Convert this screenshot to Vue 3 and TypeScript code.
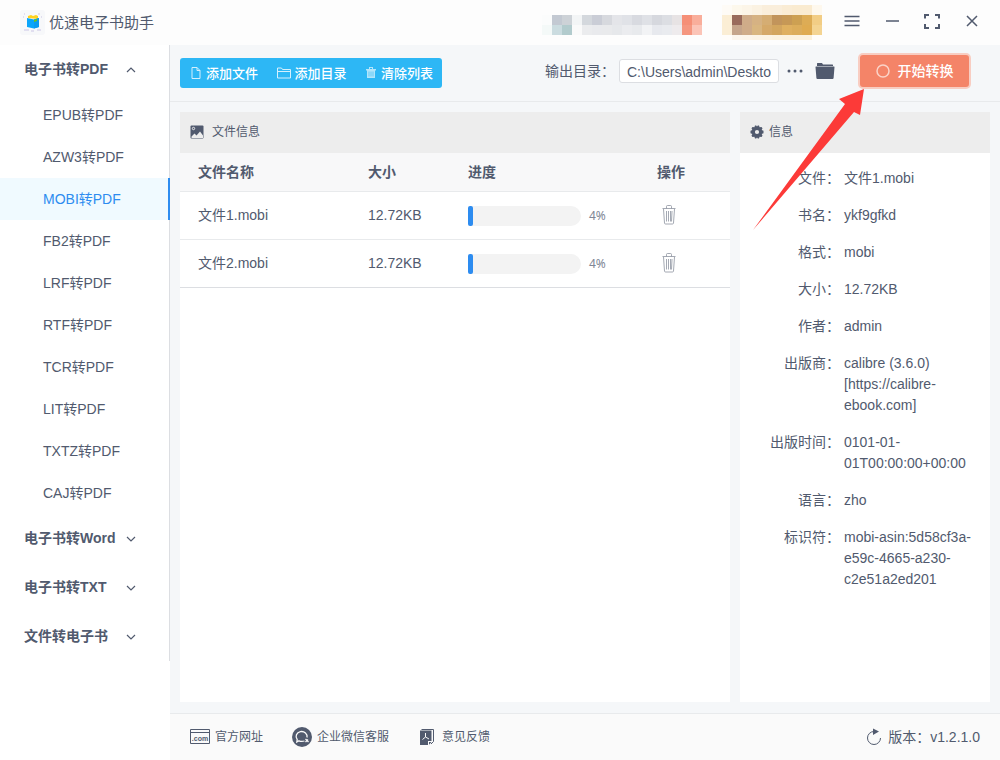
<script setup lang="ts">
import { ref } from 'vue'

interface MenuGroup {
  title: string
  open: boolean
  items: string[]
}
interface BookFile {
  name: string
  size: string
  progress: number
}

const groups = ref<MenuGroup[]>([
  {
    title: '电子书转PDF',
    open: true,
    items: ['EPUB转PDF', 'AZW3转PDF', 'MOBI转PDF', 'FB2转PDF', 'LRF转PDF', 'RTF转PDF', 'TCR转PDF', 'LIT转PDF', 'TXTZ转PDF', 'CAJ转PDF'],
  },
  { title: '电子书转Word', open: false, items: [] },
  { title: '电子书转TXT', open: false, items: [] },
  { title: '文件转电子书', open: false, items: [] },
])
const active = ref('MOBI转PDF')
const outputDir = ref('C:\\Users\\admin\\Deskto')

const files = ref<BookFile[]>([
  { name: '文件1.mobi', size: '12.72KB', progress: 4 },
  { name: '文件2.mobi', size: '12.72KB', progress: 4 },
])

const info: { label: string; lines: string[] }[] = [
  { label: '文件：', lines: ['文件1.mobi'] },
  { label: '书名：', lines: ['ykf9gfkd'] },
  { label: '格式：', lines: ['mobi'] },
  { label: '大小：', lines: ['12.72KB'] },
  { label: '作者：', lines: ['admin'] },
  { label: '出版商：', lines: ['calibre (3.6.0) ', '[https://calibre-', 'ebook.com]'] },
  { label: '出版时间：', lines: ['0101-01-', '01T00:00:00+00:00'] },
  { label: '语言：', lines: ['zho'] },
  { label: '标识符：', lines: ['mobi-asin:5d58cf3a-', 'e59c-4665-a230-', 'c2e51a2ed201'] },
]

const accountTop = ['#fbfcfc', '#c3c9d2', '#cdd2d7', '#f3f5f6', '#d4d8dd', '#cacdd6', '#d7d9de', '#e4e5e9', '#e0e2e7', '#d8dae0', '#dfe1e6', '#d6d8de', '#dcdee3', '#e7e3e4', '#f58f77', '#f9ae9b']
const accountBottom = ['#f4f9f8', '#cbdce0', '#b2cbcd', '#fafafa', '#ebecee', '#e9eaed', '#e9eaec', '#e6e8eb', '#ebecef', '#e8eaed', '#f2f3f5', '#e7e9ee', '#e9ebef', '#eeebed', '#f59780', '#fbc4b7']
const badgeRows = [
  ['#fefbf6', '#fdf8ec', '#fcf5e8', '#fbf2e2', '#faeedb', '#faeedb', '#faecd4', '#faebd0', '#faebd0', '#fef8ed'],
  ['#fbeed5', '#996b5c', '#cfac89', '#d6b283', '#d5ad73', '#c2945b', '#c69856', '#cda052', '#ddac55', '#f2cd85'],
  ['#fbeed5', '#c5a58b', '#cfac89', '#d9b680', '#d5a969', '#d3a65f', '#dfb060', '#dcad5b', '#dfab50', '#f4d492'],
  ['#fffdfa', '#fcf6ed', '#fcf5ea', '#fcf4e6', '#fcf4e4', '#fcf3e0', '#fcf2dd', '#fcf2dd', '#fcf2dd', '#fffdfa'],
]

function removeFile(index: number) {
  files.value.splice(index, 1)
}
</script>

<template>
  <div class="app">
    <header class="titlebar">
      <svg class="logo" viewBox="0 0 25 25" aria-hidden="true">
        <rect width="25" height="25" rx="3" fill="#f7f8fa" />
        <path d="M8 8V6l3-1 2 1 3-1 2 1v3z" fill="#ffd21e" />
        <path d="M7 8l7 1.500L19 8v9l-5 1.500L7 17z" fill="#0ba5fa" />
        <path d="M14 9.500L19 8v9l-5 1.500z" fill="#0b9bf0" />
        <path d="M14 10l3-1v2l-3 1z" fill="#68c51e" />
        <path d="M4 20h5m2 1h3m3-1h4M3 7h1m0-3h1m13 0h2m1 3h1" stroke="#cbc5e5" fill="none" />
      </svg>
      <h1>优速电子书助手</h1>
      <svg class="account" viewBox="0 0 160 20" aria-hidden="true">
        <rect v-for="(c, i) in accountTop" :key="'t' + i" :x="i * 10" y="0" width="10" height="10" :fill="c" />
        <rect v-for="(c, i) in accountBottom" :key="'b' + i" :x="i * 10" y="10" width="10" height="10" :fill="c" />
      </svg>
      <svg class="badge" viewBox="0 0 100 35" aria-hidden="true">
        <g v-for="(row, r) in badgeRows" :key="r">
          <rect v-for="(c, i) in row" :key="i" :x="i * 10" :y="r * 10" width="10" height="10" :fill="c" />
        </g>
      </svg>
      <nav class="window-controls">
        <button type="button" aria-label="菜单"><svg viewBox="0 0 16 16"><path d="M.5 3.500h15M.5 8h15M.5 12.500h15" /></svg></button>
        <button type="button" aria-label="最小化"><svg viewBox="0 0 16 16"><path d="M2 8h13" /></svg></button>
        <button type="button" aria-label="最大化"><svg viewBox="0 0 16 16"><path class="thick" d="M1 5.500V2h4M11 2h4v3.500M15 11v4h-4M5 15H1v-4" /></svg></button>
        <button type="button" aria-label="关闭"><svg viewBox="0 0 16 16"><path d="M3 3l10 10M13 3L3 13" /></svg></button>
      </nav>
    </header>

    <div class="body">
      <aside class="sidebar">
        <nav class="menu">
          <section v-for="g in groups" :key="g.title">
            <button class="group" type="button" :aria-expanded="g.open" @click="g.open = !g.open">
              <span>{{ g.title }}</span>
              <svg :class="{ open: g.open }" viewBox="0 0 10 10"><path d="M1 3l4 4 4-4" /></svg>
            </button>
            <template v-if="g.open">
              <a v-for="item in g.items" :key="item" href="#" class="item" :class="{ active: item === active }" @click.prevent="active = item">{{ item }}</a>
            </template>
          </section>
        </nav>
      </aside>

      <main class="main">
        <div class="toolbar">
          <div class="actions">
            <button type="button">
              <svg class="doc" viewBox="0 0 10 14"><path d="M1 1.500h5l3 3v8H1zM6 1.500v3h3" /></svg>添加文件
            </button>
            <button type="button">
              <svg class="dir" viewBox="0 0 14 14"><path d="M.5 12V2h4l1 1.500h8V12zM.5 5.500h13" /></svg>添加目录
            </button>
            <button type="button">
              <svg class="bin" viewBox="0 0 10 14"><path class="solid" d="M0 3h3V1h4v2h3v1.500H9V12H1V4.500H0zM4 2v1h2V2z" /><path class="slots" d="M3 5.500v5M5 5.500v5M7 5.500v5" /></svg>清除列表
            </button>
          </div>
          <div class="target">
            <label for="output">输出目录：</label>
            <input id="output" v-model="outputDir" class="output" type="text" />
            <button class="plain more" type="button" aria-label="选择目录">
              <svg viewBox="0 0 16 4"><circle cx="2" cy="2" r="1.500" /><circle cx="8" cy="2" r="1.500" /><circle cx="14" cy="2" r="1.500" /></svg>
            </button>
            <button class="plain folder" type="button" aria-label="打开目录">
              <svg viewBox="0 0 20 18"><path d="M2 4V1.500Q2 1 2.500 1H7l1 1.500h9.500q.5 0 .5.500v1z" /><path d="M1 4.500h18q.6 0 .5.600L18.600 16q-.1 1-1 1H2.400q-.9 0-1-1L.5 5.100Q.4 4.500 1 4.500z" /></svg>
            </button>
            <button class="start" type="button">
              <svg viewBox="0 0 14 14"><circle cx="7" cy="7" r="6" /></svg>开始转换
            </button>
          </div>
        </div>

        <div class="panels">
          <section class="panel list">
            <h2 class="wide">
              <svg viewBox="0 0 14 14"><rect x=".5" y=".5" width="13" height="13" rx="1" /><circle class="sun" cx="3.500" cy="3.500" r="1.200" /><path class="hills" d="M1.500 13v-1.500L4.500 8.500 6.500 10.500 10 6.500l3 4V13z" /></svg>
              文件信息
            </h2>
            <table>
              <thead>
                <tr><th class="c-name">文件名称</th><th class="c-size">大小</th><th>进度</th><th class="c-op">操作</th></tr>
              </thead>
              <tbody>
                <tr v-for="(f, i) in files" :key="f.name">
                  <td>{{ f.name }}</td>
                  <td>{{ f.size }}</td>
                  <td>
                    <div class="progress">
                      <div class="track"><div class="fill" :style="{ width: f.progress + '%' }"></div></div>
                      <span>{{ f.progress }}%</span>
                    </div>
                  </td>
                  <td>
                    <button class="plain delete" type="button" aria-label="删除" @click="removeFile(i)">
                      <svg viewBox="0 0 14 20"><path d="M.5 3.500h13M4.500 3.500v-2q0-1 1-1h3q1 0 1 1v2M1.500 4l1 14q.1 1 1 1h7q.9 0 1-1l1-14M4.500 6v10.500M6.500 6v10.500M8.500 6v10.500M10 6l-.5 10.500" /></svg>
                    </button>
                  </td>
                </tr>
              </tbody>
            </table>
          </section>

          <section class="panel details">
            <h2>
              <svg viewBox="0 0 14 14"><path fill-rule="evenodd" d="M5 .5h1.200L7 1.500l.8-1H9l.6 1.700 1.900-.3 1 1.400-.8 1.600 1.800.8v2.600l-1.800.8.8 1.600-1 1.400-1.900-.3-.6 1.700H7.800L7 12.500l-.8 1H5l-.6-1.700-1.900.3-1-1.400.8-1.600-1.800-.8V5.700l1.800-.8-.8-1.600 1-1.400 1.900.3zM7 4.900a2.100 2.100 0 100 4.200 2.100 2.100 0 000-4.200z" /></svg>
              信息
            </h2>
            <dl>
              <div v-for="row in info" :key="row.label">
                <dt>{{ row.label }}</dt>
                <dd><template v-for="(line, n) in row.lines" :key="n">{{ line }}<wbr /></template></dd>
              </div>
            </dl>
          </section>
        </div>

        <footer>
          <a href="#" class="site">
            <svg viewBox="0 0 20 16"><path class="line" d="M.5.500h19v14H.5zM.5 3.500h19" /><text x="10" y="12" text-anchor="middle">.com</text></svg>官方网址
          </a>
          <a href="#" class="service">
            <svg viewBox="0 0 20 20"><circle cx="10" cy="10" r="10" /><path class="ring" d="M12.500 14Q9.500 15 7 13.800L4.800 15l.4-2.500A5.500 5 0 1115 10.500" /><path class="ring" d="M13.500 12l3 3M13.500 15l2.500-2.500" /></svg>企业微信客服
          </a>
          <a href="#" class="feedback">
            <svg viewBox="0 0 16 18"><path d="M1 2.500h11.500V13H9v4H1zM10 14h2.500L10 16.800z" /><path class="line" d="M2.500 1.500h12V13.500L12 16" /><path class="glyph" d="M6.500 5v4L3.500 11.500M6.500 9l3.500 2" /></svg>意见反馈
          </a>
          <button class="plain version" type="button">
            <svg viewBox="0 0 16 18"><path class="arc" d="M8 3.500A6.500 6.500 0 1014.500 10" /><path d="M7 .5l6 3-6 3.500z" /></svg>版本：v1.2.1.0
          </button>
        </footer>
      </main>
    </div>

    <svg class="pointer" viewBox="0 0 114 144" aria-hidden="true"><path d="M112 1L87 11l6 5L1 142l101-118 6 3z" /></svg>
  </div>
</template>

<style>
body {
  margin: 0;
}
</style>

<style scoped>
.app {
  position: relative;
  display: flex;
  flex-direction: column;
  min-height: 100vh;
  background: #f5f7f9;
  color: #515a6e;
  font: 14px/21px "Liberation Sans", "Noto Sans CJK SC", sans-serif;
}
.app *,
.app {
  box-sizing: border-box;
}
button {
  font: inherit;
  color: inherit;
  border: 0;
  padding: 0;
  background: none;
  cursor: pointer;
}
a {
  color: inherit;
  text-decoration: none;
}
svg {
  display: block;
  flex: none;
  fill: currentColor;
}
h1,
h2,
dl,
dd {
  margin: 0;
  font-weight: 400;
}
.plain {
  display: flex;
  align-items: center;
}
.titlebar {
  display: flex;
  align-items: center;
  height: 45px;
  padding: 0 20px;
  background: #fdfdfd;
}
.logo {
  width: 25px;
  height: 25px;
}
h1 {
  margin-left: 4px;
  margin-right: auto;
  font-size: 15px;
}
.account {
  width: 160px;
  height: 20px;
  margin: 5px 20px 0 0;
}
.badge {
  width: 100px;
  height: 35px;
}
.window-controls {
  display: flex;
  gap: 24px;
  margin-left: 22px;
  padding-bottom: 3px;
}
.window-controls svg {
  width: 16px;
  height: 16px;
  fill: none;
  stroke: currentColor;
  stroke-width: 1.500;
}
.window-controls .thick {
  stroke-width: 2;
}
.body {
  display: flex;
  flex: 1;
}
.sidebar {
  flex: none;
  width: 170px;
  background: #fff;
}
.menu {
  border-right: 1px solid #dcdee2;
}
.group {
  display: flex;
  align-items: center;
  justify-content: space-between;
  width: 100%;
  height: 49px;
  padding: 0 33px 0 24px;
  font-weight: 700;
}
.group svg {
  width: 10px;
  height: 10px;
  fill: none;
  stroke: currentColor;
  stroke-width: 1.200;
}
.group svg.open {
  transform: rotate(180deg);
}
.item {
  display: block;
  padding-left: 43px;
  line-height: 42px;
}
.item.active {
  margin-right: -1px;
  border-right: 2px solid #2d8cf0;
  background: #f0faff;
  color: #2d8cf0;
}
.main {
  display: flex;
  flex: 1;
  flex-direction: column;
  min-width: 0;
}
.toolbar {
  display: flex;
  align-items: center;
  justify-content: space-between;
  height: 57px;
  padding: 0 29px 0 10px;
  border-bottom: 1px solid #e8eaec;
}
.actions {
  display: flex;
  justify-content: space-between;
  width: 262px;
  height: 30px;
  padding: 0 9px 0 11px;
  border-radius: 3px;
  background: #2db7f5;
  color: #fff;
  font-size: 13px;
  font-weight: 500;
}
.actions button {
  display: flex;
  align-items: center;
}
.actions svg {
  height: 14px;
  fill: none;
  stroke: currentColor;
  opacity: 0.8;
}
.actions .doc {
  width: 10px;
  margin-right: 5px;
}
.actions .dir {
  width: 14px;
  margin-right: 3px;
}
.actions .bin {
  width: 10px;
  margin-right: 5px;
}
.actions .solid {
  fill: currentColor;
  fill-rule: evenodd;
  stroke: none;
  opacity: 0.8;
}
.actions .slots {
  stroke: #2db7f5;
  opacity: 0.6;
}
.target {
  display: flex;
  align-items: center;
  padding-bottom: 4px;
}
.output {
  width: 160px;
  height: 24px;
  margin-left: 4px;
  padding: 1px 7px 0;
  border: 1px solid #dcdee2;
  border-radius: 3px;
  background: #fff;
  color: inherit;
  font: inherit;
}
.more {
  margin-left: 8px;
}
.more svg {
  width: 16px;
  height: 4px;
}
.folder {
  margin-left: 12px;
}
.folder svg {
  width: 20px;
  height: 18px;
}
.start {
  display: flex;
  align-items: center;
  justify-content: center;
  gap: 8px;
  width: 113px;
  height: 36px;
  margin-left: 23px;
  border: 2px solid #f8cdc2;
  border-radius: 5px;
  background: #f48468;
  color: #fff;
  font-weight: 500;
}
.start svg {
  width: 14px;
  height: 14px;
  fill: none;
  stroke: #fbd3c8;
  stroke-width: 1.500;
}
.panels {
  display: flex;
  flex: 1;
  gap: 10px;
  padding: 10px 10px 11px;
}
.panel {
  background: #fff;
}
.list {
  flex: 1;
}
.details {
  flex: none;
  width: 250px;
}
h2 {
  display: flex;
  align-items: center;
  gap: 5px;
  height: 41px;
  padding: 0 10px 1px;
  background: #ededed;
  font-size: 12px;
}
h2.wide {
  gap: 8px;
}
h2 svg {
  width: 14px;
  height: 14px;
}
.hills {
  fill: #ededed;
}
.sun {
  fill: none;
  stroke: #ededed;
}
table {
  width: 100%;
  table-layout: fixed;
  border-collapse: separate;
  border-spacing: 0;
}
th,
td {
  height: 48px;
  padding: 0 0 0 18px;
  border-bottom: 1px solid #e8eaec;
  text-align: left;
}
th {
  height: 39px;
  background: #f8f8f9;
  font-weight: 700;
}
tbody tr:last-child td {
  border-color: #dcdee2;
}
.c-name {
  width: 170px;
}
.c-size {
  width: 100px;
}
.c-op {
  width: 91px;
}
.progress {
  display: flex;
  align-items: center;
  gap: 8px;
}
.track {
  width: 113px;
  height: 20px;
  border-radius: 4px 10px 10px 4px;
  background: #f3f3f3;
}
.fill {
  height: 20px;
  min-width: 5px;
  border-radius: 2px;
  background: #2d8cf0;
}
.progress span {
  color: #808695;
  font-family: "Noto Sans", sans-serif;
  font-size: 12px;
}
.delete {
  margin-left: 5px;
  padding-bottom: 2px;
  color: #8d93a0;
}
.delete svg {
  width: 14px;
  height: 20px;
  fill: none;
  stroke: currentColor;
  stroke-width: 0.8;
}
dl {
  padding: 15px 16px 0 0;
}
dl > div {
  display: flex;
  margin-bottom: 16px;
}
dt {
  flex: none;
  width: 100px;
  text-align: right;
}
dd {
  flex: 1;
  min-width: 0;
  margin-left: 4px;
}
footer {
  display: flex;
  align-items: center;
  height: 47px;
  padding: 0 20px;
  border-top: 1px solid #e8eaec;
  background: #fafafa;
  font-size: 12px;
}
footer a {
  display: flex;
  align-items: center;
}
footer .line {
  fill: none;
  stroke: currentColor;
}
.site svg {
  width: 20px;
  height: 16px;
  margin-right: 5px;
}
.site text {
  font: bold 7px "Liberation Sans", sans-serif;
}
.service {
  margin-left: 29px;
}
.service svg {
  width: 20px;
  height: 20px;
  margin-right: 5px;
}
.service .ring {
  fill: none;
  stroke: #fafafa;
  stroke-width: 1.300;
}
.feedback {
  margin-left: 30px;
}
.feedback svg {
  width: 16px;
  height: 18px;
  margin-right: 7px;
}
.feedback .glyph {
  fill: none;
  stroke: #fafafa;
}
.version {
  margin-left: auto;
  font-size: 14px;
}
.version svg {
  width: 16px;
  height: 18px;
  margin-right: 6px;
}
.version .arc {
  fill: none;
  stroke: currentColor;
}
.pointer {
  position: absolute;
  top: 88px;
  right: 134px;
  width: 114px;
  height: 144px;
  fill: #fc3a38;
  pointer-events: none;
}
</style>
